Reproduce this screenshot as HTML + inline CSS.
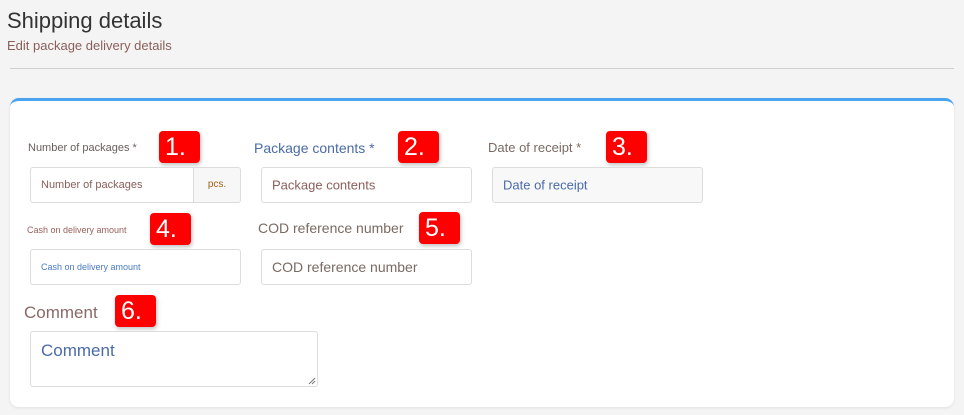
<!DOCTYPE html>
<html><head><style>
*{box-sizing:border-box;margin:0;padding:0}
body{width:964px;height:415px;background:#f4f4f4;font-family:"Liberation Sans",sans-serif;position:relative;overflow:hidden}
.a{position:absolute;white-space:nowrap}
.h1{left:7px;top:8px;font-size:22px;color:#333}
.sub{left:7px;top:38px;font-size:13px;color:#8a5f5a}
.hr{left:10px;top:68px;width:944px;height:1px;background:#cfcfcf}
.card{left:10px;top:98px;width:944px;height:309px;background:#fff;border-radius:9px;border-top:3px solid #4aa3ee;box-shadow:0 1px 3px rgba(0,0,0,.08)}
.b{position:absolute;width:41px;height:32px;background:#f00;border-radius:4px;color:#fff;font-size:25px;line-height:32px;padding-left:6px;box-shadow:1px 2px 4px rgba(0,0,0,.25)}
.in{position:absolute;border:1px solid #dcdcdc;border-radius:3px;background:#fff;height:36px;width:211px;overflow:hidden}
.in span{position:absolute;left:10px;top:50%;transform:translateY(-50%)}
</style></head><body>
<div class="a h1">Shipping details</div>
<div class="a sub">Edit package delivery details</div>
<div class="a hr"></div>
<div class="a card"></div>

<div class="a" style="left:28px;top:142px;font-size:11px;color:#6b5e5e">Number of packages *</div>
<div class="b" style="left:159px;top:131px">1.</div>
<div class="in" style="left:30px;top:167px"><span style="font-size:11px;color:#8a5f5a">Number of packages</span><div style="position:absolute;left:162px;top:0;width:47px;height:34px;border-left:1px solid #dcdcdc;background:#f7f7f7;font-size:10px;color:#a0601a;text-align:center;line-height:34px">pcs.</div></div>

<div class="a" style="left:254px;top:140px;font-size:14px;color:#4a6ba8">Package contents *</div>
<div class="b" style="left:398px;top:131px">2.</div>
<div class="in" style="left:261px;top:167px"><span style="font-size:13px;color:#8a5f5a">Package contents</span></div>

<div class="a" style="left:488px;top:140px;font-size:13px;color:#7a6a62">Date of receipt *</div>
<div class="b" style="left:606px;top:131px">3.</div>
<div class="in" style="left:492px;top:167px;background:#f8f8f8"><span style="font-size:13px;color:#4a6ba8">Date of receipt</span></div>

<div class="a" style="left:27px;top:225px;font-size:9px;color:#9a5f5a">Cash on delivery amount</div>
<div class="b" style="left:150px;top:213px">4.</div>
<div class="in" style="left:30px;top:249px"><span style="font-size:9px;color:#4a7ac0">Cash on delivery amount</span></div>

<div class="a" style="left:258px;top:220px;font-size:14px;color:#7a6a62">COD reference number</div>
<div class="b" style="left:419px;top:212px">5.</div>
<div class="in" style="left:261px;top:249px"><span style="font-size:14px;color:#7a6a62">COD reference number</span></div>

<div class="a" style="left:24px;top:303px;font-size:17px;color:#8a6a68">Comment</div>
<div class="b" style="left:115px;top:295px">6.</div>
<div class="in" style="left:30px;top:331px;width:288px;height:56px"><span style="top:9px;transform:none;font-size:17px;color:#4a6ba8">Comment</span>
<svg style="position:absolute;right:1px;bottom:1px" width="8" height="8"><path d="M7 1L1 7M7 4L4 7" stroke="#777" stroke-width="1"/></svg></div>
</body></html>
